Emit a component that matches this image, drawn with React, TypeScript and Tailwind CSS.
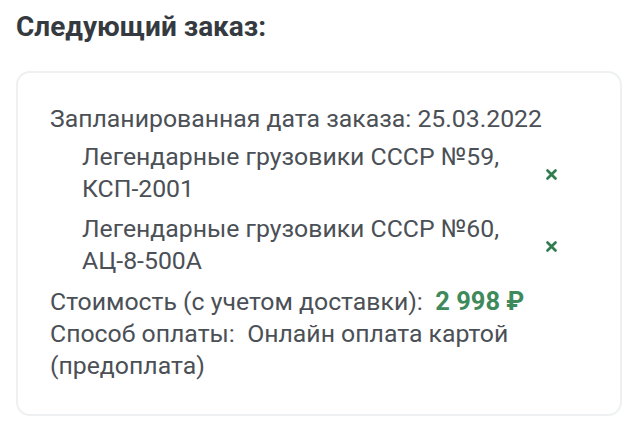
import React from 'react';

const items = [
    { name: 'Легендарные грузовики СССР №59,', code: 'КСП-2001' },
    { name: 'Легендарные грузовики СССР №60,', code: 'АЦ-8-500А' },
];

const App: React.FC = () => {
    return (
        <div className="w-[638px] h-[427px] bg-white px-4 pt-[10px] font-['Roboto',sans-serif] text-[#4b5056]">
            <h2 className="text-[28px] font-bold text-[#343a40] leading-[34px]">Следующий заказ:</h2>
            <div className="mt-[27px] w-[606px] rounded-[14px] border-2 border-[#eef0f2] pl-[32px] pr-[36px] pt-[30px] pb-[32px] text-[24.8px] leading-[32px]">
                <p>Запланированная дата заказа: 25.03.2022</p>
                <ul className="pl-[32px] flex flex-col gap-[8px] mt-[6px]">
                    {items.map((item) => (
                        <li key={item.code} className="flex items-center justify-between">
                            <span className="w-[430px]">
                                {item.name} <span className="whitespace-nowrap">{item.code}</span>
                            </span>
                            <svg width="11" height="11" viewBox="0 0 11 11" className="mt-[3px] mr-[27px]">
                                <path d="M1.5 1.5 L9.5 9.5 M9.5 1.5 L1.5 9.5" stroke="#2e7d4f" strokeWidth="2.6" strokeLinecap="round" />
                            </svg>
                        </li>
                    ))}
                </ul>
                <p className="mt-[8px]">
                    Стоимость (с учетом доставки):&nbsp; <span className="text-[25.5px] font-bold text-[#3f8a5c]">2 998 ₽</span>
                </p>
                <p>Способ оплаты:&nbsp; Онлайн оплата картой (предоплата)</p>
            </div>
        </div>
    );
};

export default App;
